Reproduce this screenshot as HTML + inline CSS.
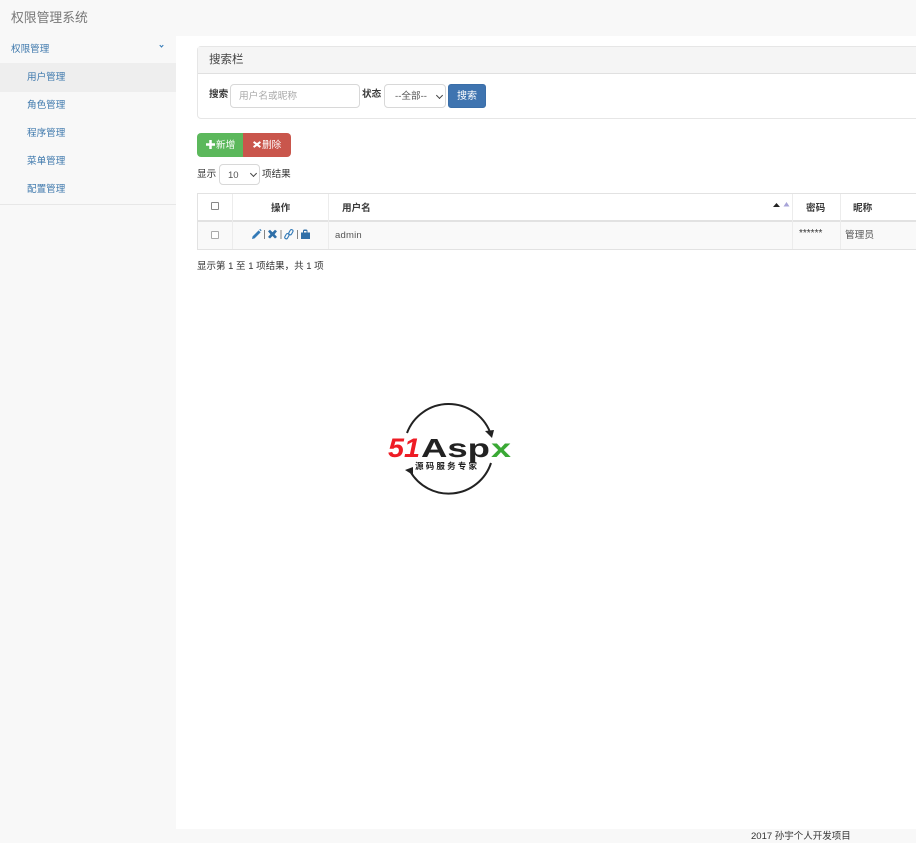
<!DOCTYPE html>
<html lang="zh-CN">
<head>
<meta charset="utf-8">
<title>权限管理系统</title>
<style>
html,body{margin:0;padding:0;background:#fff;}
body{position:relative;width:916px;height:843px;overflow:hidden;font:9.6px/14px "Liberation Sans","Noto Sans CJK SC",sans-serif;color:#333;}
#w{position:absolute;left:0;top:0;width:916px;height:843px;overflow:hidden;filter:blur(.3px);}
.a{position:absolute;white-space:nowrap;box-sizing:border-box;}
.box{border:1px solid #e6e6e6;}
.ctl{background:#fff;border:1px solid #d8d8d8;border-radius:4px;}
.nav{color:#3f79ad;left:27px;font-size:9.6px;}
b.a{font-weight:700;color:#3a3a3a;}
.chev{position:absolute;width:4px;height:4px;border-right:1.300px solid #444;border-bottom:1.300px solid #444;transform:rotate(45deg);}
</style>
</head>
<body>
<div id="w">
<!-- header / sidebar / footer -->
<div class="a" style="left:0;top:0;width:916px;height:36px;background:#f8f8f8;"></div>
<div class="a" style="left:11px;top:9px;font-size:12.800px;line-height:18px;color:#777;">权限管理系统</div>
<div class="a" style="left:0;top:36px;width:176px;height:793px;background:#f8f8f8;"></div>
<div class="a" style="left:0;top:829px;width:916px;height:14px;background:#f8f8f8;"></div>
<div class="a" style="left:751px;top:830px;font-size:9.500px;line-height:14px;color:#333;">2017 孙宇个人开发项目</div>

<div class="a" style="left:11px;top:43px;color:#3f79ad;">权限管理</div>
<div class="a" style="left:160px;top:44px;width:3px;height:3px;border-right:1px solid #337ab7;border-bottom:1px solid #337ab7;transform:rotate(45deg);"></div>
<div class="a" style="left:0;top:63px;width:176px;height:29px;background:#eee;"></div>
<div class="a nav" style="top:71px;">用户管理</div>
<div class="a nav" style="top:99px;">角色管理</div>
<div class="a nav" style="top:127px;">程序管理</div>
<div class="a nav" style="top:155px;">菜单管理</div>
<div class="a nav" style="top:183px;">配置管理</div>
<div class="a" style="left:0;top:204px;width:176px;height:1px;background:#e7e7e7;"></div>

<!-- search panel -->
<div class="a box" style="left:197px;top:46px;width:730px;height:73px;border-radius:4px;"></div>
<div class="a" style="left:198px;top:47px;width:718px;height:27px;background:#f5f5f5;border-bottom:1px solid #e0e0e0;"></div>
<div class="a" style="left:209px;top:52px;font-size:11.500px;line-height:16px;color:#444;">搜索栏</div>
<b class="a" style="left:209px;top:88px;">搜索</b>
<div class="a ctl" style="left:230px;top:84px;width:130px;height:24px;"></div>
<div class="a" style="left:239px;top:90px;color:#aaa;font-size:9.700px;">用户名或昵称</div>
<b class="a" style="left:362px;top:88px;">状态</b>
<div class="a ctl" style="left:384px;top:84px;width:62px;height:24px;"></div>
<div class="a" style="left:395px;top:90px;font-size:9.600px;color:#555;">--全部--</div>
<div class="chev" style="left:437px;top:93px;"></div>
<div class="a" style="left:448px;top:84px;width:38px;height:24px;background:#3f74b0;border:1px solid #3a6ea8;border-radius:3px;color:#fff;text-align:center;line-height:24px;font-size:10px;">搜索</div>

<!-- buttons -->
<div class="a" style="left:197px;top:133px;width:46px;height:24px;background:#5cb85c;border-radius:4px 0 0 4px;"></div>
<svg class="a" style="left:206px;top:140px;" width="9" height="9" viewBox="0 0 10 10"><path d="M3.600 0h2.800v3.600H10v2.800H6.400V10H3.600V6.400H0V3.600h3.600z" fill="#fff"/></svg>
<div class="a" style="left:216px;top:139px;color:#fff;">新增</div>
<div class="a" style="left:243px;top:133px;width:48px;height:24px;background:#c9564c;border-radius:0 4px 4px 0;"></div>
<svg class="a" style="left:253px;top:140px;" width="8" height="9" viewBox="0 0 10 10"><path d="M1.500 0.800L5 3.300 8.500.8l1.500 2L7 5l3 2.200-1.500 2L5 6.700 1.500 9.200 0 7.200 3 5 0 2.800z" fill="#fff"/></svg>
<div class="a" style="left:262px;top:139px;color:#fff;">删除</div>

<div class="a" style="left:197px;top:168px;">显示</div>
<div class="a ctl" style="left:219px;top:164px;width:41px;height:21px;"></div>
<div class="a" style="left:228px;top:169px;font-size:9.500px;color:#555;">10</div>
<div class="chev" style="left:251px;top:171px;"></div>
<div class="a" style="left:262px;top:168px;">项结果</div>

<!-- table -->
<div class="a" style="left:197px;top:193px;width:719px;height:57px;border-top:1px solid #e2e2e2;border-bottom:1px solid #e2e2e2;border-left:1px solid #e2e2e2;"></div>
<div class="a" style="left:198px;top:222px;width:718px;height:27px;background:#f9f9f9;"></div>
<div class="a" style="left:198px;top:220px;width:718px;height:2px;background:#e2e2e2;"></div>
<div class="a" style="left:232px;top:194px;width:1px;height:55px;background:#ececec;"></div>
<div class="a" style="left:328px;top:194px;width:1px;height:55px;background:#ececec;"></div>
<div class="a" style="left:792px;top:194px;width:1px;height:55px;background:#ececec;"></div>
<div class="a" style="left:840px;top:194px;width:1px;height:55px;background:#ececec;"></div>

<div class="a" style="left:211px;top:202px;width:8px;height:8px;border:1px solid #888;border-radius:1px;background:#fff;"></div>
<b class="a" style="left:271px;top:202px;">操作</b>
<b class="a" style="left:342px;top:202px;">用户名</b>
<svg class="a" style="left:773px;top:201px;" width="18" height="7" viewBox="0 0 18 7"><path d="M0 6L3.500 2 7 6z" fill="#222"/><path d="M10.500 5.500L13.500 1 16.500 5.500z" fill="#a8a4d8"/></svg>
<b class="a" style="left:806px;top:202px;">密码</b>
<b class="a" style="left:853px;top:202px;">昵称</b>

<div class="a" style="left:211px;top:231px;width:8px;height:8px;border:1px solid #aaa;border-radius:1px;background:#fff;"></div>
<svg class="a" style="left:250px;top:228px;" width="62" height="12" viewBox="0 0 62 12">
<path d="M2 11l.6-2.600 6-6 2 2-6 6z" fill="#337ab7"/><path d="M9.300 1.700l.8-.8 1.500 1.500-.8.8z" fill="#337ab7"/>
<path d="M14.500 2v9" stroke="#666" stroke-width=".8"/>
<path d="M18 3.300L20 1.800l2.500 2.500L25 1.800l2 1.500-2.400 2.900L27 9l-2 1.500-2.500-2.500-2.500 2.500L18 9l2.400-2.800z" fill="#2f6fa8"/>
<path d="M31 2v9" stroke="#666" stroke-width=".8"/>
<g fill="none" stroke="#337ab7" stroke-width="1.100"><rect x="35.500" y="5.500" width="3" height="5.500" rx="1.500" transform="rotate(30 37 8)"/><rect x="39.500" y="1.500" width="3" height="5.500" rx="1.500" transform="rotate(30 41 4)"/></g>
<path d="M47.500 2v9" stroke="#666" stroke-width=".8"/>
<path d="M51 4.500h2V3a1.500 1.500 0 0 1 1.500-1.500h1.500A1.500 1.500 0 0 1 57.500 3v1.500H60v6.500H51z M54 4.500h2.500V3H54z" fill="#2f6fa8" fill-rule="evenodd"/>
</svg>
<div class="a" style="left:335px;top:229px;font-size:9.500px;color:#555;letter-spacing:.2px;">admin</div>
<div class="a" style="left:799px;top:227px;font-size:10px;color:#333;">******</div>
<div class="a" style="left:845px;top:229px;font-size:9.700px;color:#555;">管理员</div>

<div class="a" style="left:197px;top:260px;font-size:9.500px;">显示第 1 至 1 项结果，共 1 项</div>

<!-- logo -->
<svg class="a" style="left:380px;top:395px;" width="140" height="105" viewBox="0 0 140 105">
<path d="M27 38A44.500 44.500 0 0 1 110 37" fill="none" stroke="#222" stroke-width="2"/>
<path d="M105 36l9-1-2 8z" fill="#222"/>
<path d="M111 68A44.500 44.500 0 0 1 30 76" fill="none" stroke="#222" stroke-width="2"/>
<path d="M25 75l8-3 0 8z" fill="#222"/>
<text x="8" y="62" font-family="'Liberation Sans',sans-serif" font-size="27" font-weight="700" font-style="italic" fill="#ee1c25" textLength="32" lengthAdjust="spacingAndGlyphs">51</text>
<text x="41" y="62" font-family="'Liberation Sans',sans-serif" font-size="26" fill="#222" font-weight="700" textLength="69" lengthAdjust="spacingAndGlyphs">Asp</text>
<text x="111" y="62" font-family="'Liberation Sans',sans-serif" font-size="26" font-weight="700" fill="#3aa935" textLength="20" lengthAdjust="spacingAndGlyphs">x</text>
<text x="35" y="74" font-family="'Liberation Sans','Noto Sans CJK SC',sans-serif" font-size="8.500" font-weight="700" fill="#222" letter-spacing="2.200">源码服务专家</text>
</svg>
</div>
</body>
</html>
